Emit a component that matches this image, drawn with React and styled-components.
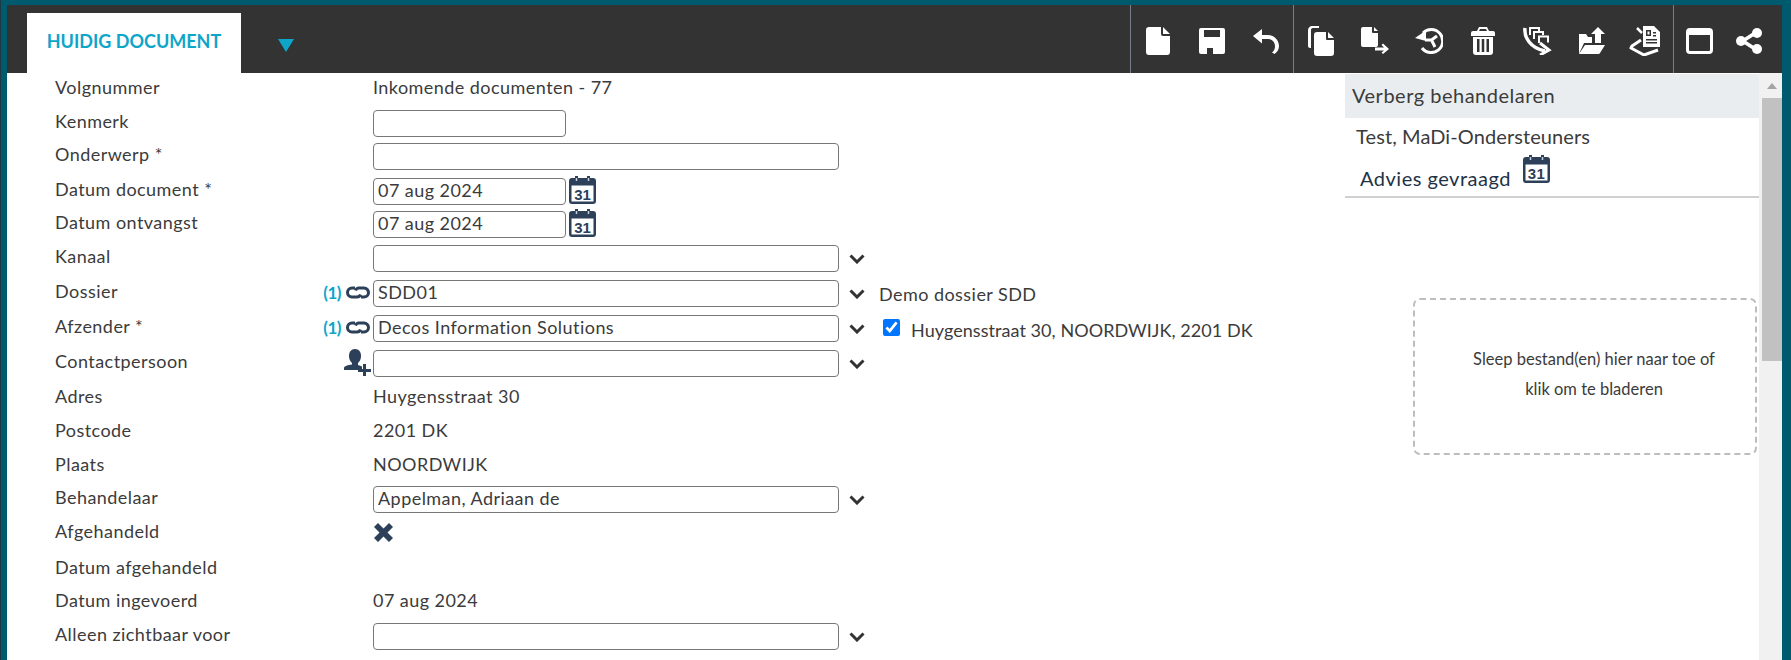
import styled, { createGlobalStyle } from "styled-components";

const GlobalStyle = createGlobalStyle`
  html, body { margin: 0; padding: 0; }
  body { font-family: Lato, "Open Sans", sans-serif; color: #3b3b3b; overflow: hidden; }
`;

const Frame = styled.div`
  width: 1791px;
  height: 660px;
  box-sizing: border-box;
  padding: 5px 9px 0 7px;
  background: #005a6e;
  box-shadow: inset 7px 0 0 -6px #1c3a46;
  display: flex;
  flex-direction: column;
  overflow: hidden;
`;

const Toolbar = styled.div`
  height: 68px;
  flex: none;
  display: flex;
  background: #333333;
  padding-right: 8px;
  box-sizing: border-box;
`;

const Tab = styled.div`
  margin: 8px 0 0 20px;
  width: 214px;
  height: 60px;
  background: #fff;
  color: #0ea5c9;
  font-size: 18px;
  font-weight: 700;
  line-height: 56px;
  text-align: center;
  box-sizing: border-box;
`;

const TabArrow = styled.svg`
  margin: 34px 0 0 37px;
  width: 16px;
  height: 13px;
`;

const ToolGroup = styled.div`
  display: flex;
  border-left: 1px solid #77808a;
  padding-right: ${(p) => p.$pad || 0}px;
  margin-left: ${(p) => (p.$push ? "auto" : 0)};
`;

const ToolButton = styled.div`
  width: ${(p) => p.$w || 54}px;
  display: flex;
  align-items: center;
  justify-content: center;
  padding-top: 3px;
  box-sizing: border-box;
`;

const Body = styled.div`
  flex: 1;
  display: flex;
  background: #fff;
  min-height: 0;
`;

const Form = styled.div`
  flex: 1;
  padding-left: 48px;
`;

const Row = styled.div`
  height: 30px;
  margin-top: ${(p) => p.$top}px;
  display: flex;
  align-items: center;
`;

const LabelCell = styled.div`
  width: 318px;
  flex: none;
  display: flex;
  align-items: center;
  justify-content: space-between;
  padding-right: 2px;
  box-sizing: border-box;
`;

const Label = styled.span`
  font-size: 18px;
  letter-spacing: 0.45px;
  padding-bottom: 2px;
`;

const Value = styled.span`
  font-size: 18px;
  letter-spacing: 0.45px;
  padding-bottom: 2px;
`;

const Address = styled.span`
  font-size: 18px;
  letter-spacing: 0.06px;
  margin-top: 5px;
`;

const Prefix = styled.span`
  display: flex;
  align-items: center;
  gap: 4px;
  color: #0ea5c9;
  font-size: 17px;
  font-weight: 700;
  letter-spacing: -0.5px;
`;

const Field = styled.input`
  width: ${(p) => p.$w}px;
  height: 27px;
  margin-top: 2px;
  box-sizing: border-box;
  border: 1px solid #777;
  border-radius: 4px;
  padding: 0 4px 2px;
  font: 18px Lato, "Open Sans", sans-serif;
  letter-spacing: 0.45px;
  color: #3b3b3b;
  background: #fff;
  outline: none;
`;

const Chevron = styled.svg`
  width: 16px;
  height: 10px;
  margin: 4px 0 0 10px;
  flex: none;
`;

const Note = styled.span`
  margin: 3px 0 0 14px;
  font-size: 18px;
  letter-spacing: 0.45px;
`;

const Check = styled.input`
  width: 17px;
  height: 17px;
  margin: 0 11px 0 18px;
`;

const CalendarSvg = styled.svg`
  width: 27px;
  height: 28px;
  margin-left: ${(p) => p.$left || 0}px;
  flex: none;
  display: block;
`;

const Side = styled.div`
  width: 414px;
  flex: none;
`;

const SideHeader = styled.div`
  height: 44px;
  margin-top: 1px;
  padding-left: 7px;
  background: #e9edf0;
  font-size: 20px;
  letter-spacing: 0.5px;
  line-height: 43px;
`;

const Person = styled.div`
  height: 38px;
  padding-left: 11px;
  font-size: 20px;
  letter-spacing: 0.1px;
  line-height: 36px;
`;

const Status = styled.div`
  height: 40px;
  padding-left: 15px;
  display: flex;
  align-items: flex-end;
  font-size: 20px;
  letter-spacing: 0.5px;
  color: #1f3347;
  border-bottom: 2px solid #d0d0d0;
`;

const StatusText = styled.span`
  margin-bottom: 6px;
`;

const StatusIcon = styled.span`
  margin: 0 0 13px 12px;
`;

const Drop = styled.div`
  margin: 100px 0 0 68px;
  width: 344px;
  height: 157px;
  box-sizing: border-box;
  border: 2px dashed #bdbdbd;
  border-radius: 7px;
  padding: 0 0 6px 18px;
  display: flex;
  align-items: center;
  justify-content: center;
  text-align: center;
  font-size: 16.5px;
  line-height: 30px;
`;

const Scrollbar = styled.div`
  width: 23px;
  flex: none;
  background: #f1f1f1;
  padding-left: 3px;
  box-sizing: border-box;
`;

const ScrollArrow = styled.svg`
  display: block;
  width: 20px;
  height: 25px;
`;

const ScrollThumb = styled.div`
  width: 20px;
  height: 263px;
  background: #c1c1c1;
`;

const Calendar = ({ left }) => (
  <CalendarSvg $left={left} viewBox="0 0 27 28">
    <path
      fill="#2d4059"
      fillRule="evenodd"
      d="M3 2h3V0h3v2h9V0h3v2h3a3 3 0 013 3v20a3 3 0 01-3 3H3a3 3 0 01-3-3V5a3 3 0 013-3zM2.500 9.500v16h22v-16z"
    />
    <path d="M7.500 2v3M19.500 2v3" stroke="#c8d0d8" strokeWidth="1.500" />
    <text x="13.500" y="23.500" textAnchor="middle" fontFamily="Liberation Sans" fontWeight="700" fontSize="15" fill="#2d4059">
      31
    </text>
  </CalendarSvg>
);

const ChainIcon = () => (
  <svg width="26" height="13" viewBox="0 0 26 13" fill="none" stroke="#2d4059" strokeWidth="3">
    <path d="M10 2H7a4.500 4.500 0 000 9h5c2 0 3-1 3.500-2.500" />
    <path d="M16 11h3a4.500 4.500 0 000-9h-5c-2 0-3 1-3.500 2.500" />
  </svg>
);

const UserPlusIcon = () => (
  <svg width="27" height="27" viewBox="0 0 27 27" fill="#2d4059">
    <path d="M11 0c4 0 6 3 6 7 0 3-1 5-3 7v2c2 .5 3 1 4 1.500V21H0v-2c0-2 4-3 8-3.500V14C6 12 5 10 5 7c0-4 2-7 6-7z" />
    <path d="M19 15h3v5h5v3h-5v4h-3v-4h-5v-3h5z" />
  </svg>
);

const CloseIcon = () => (
  <svg width="21" height="21" viewBox="0 0 21 21" fill="#2d4059">
    <path d="M5 1l5.500 5.500L16 1l4 4-5.500 5.500L20 16l-4 4-5.500-5.500L5 20l-4-4 5.500-5.500L1 5z" />
  </svg>
);

const ChevronDown = () => (
  <Chevron viewBox="0 0 16 10" fill="none" stroke="#333" strokeWidth="3">
    <path d="M1.500 1.500L8 8l6.500-6.500" />
  </Chevron>
);

const ToolIcon = ({ w, h, children }) => (
  <svg width={w} height={h} viewBox={`0 0 ${w} ${h}`} fill="#fff" fillRule="evenodd">
    {children}
  </svg>
);

const tools1 = [
  <ToolIcon w={24} h={28} key="new">
    <path d="M3 0h12v7a2 2 0 002 2h7v16a3 3 0 01-3 3H3a3 3 0 01-3-3V3a3 3 0 013-3zM17 0l7 7h-7z" />
  </ToolIcon>,
  <ToolIcon w={26} h={26} key="save">
    <path d="M2 0h22a2 2 0 012 2v22a2 2 0 01-2 2H2a2 2 0 01-2-2V2a2 2 0 012-2zM5 2v7h16V2zM8 20v6h6v-6z" />
  </ToolIcon>,
  <ToolIcon w={26} h={26} key="undo">
    <path d="M9 1L0 8l9 7.500V11h6c4 0 7 3 7 7 0 3-1 5-3 6.500l2.500 1.500c3-2 4.500-5 4.500-8 0-6-5-11-11-11H9z" />
  </ToolIcon>,
];

const tools2 = [
  <ToolIcon w={26} h={30} key="copy">
    <path d="M4 0h7v2H5C3.500 2 3 3 3 4v18H2c-1 0-2-1-2-2V4c0-2 2-4 4-4z" />
    <path d="M9 6h9v7a1 1 0 001 1h7v13a3 3 0 01-3 3H9a3 3 0 01-3-3V9a3 3 0 013-3zM20 6l6 6h-6z" />
  </ToolIcon>,
  <ToolIcon w={28} h={27} key="move">
    <path d="M2 0h9v5a1 1 0 001 1h5v12a2 2 0 01-2 2H2a2 2 0 01-2-2V2a2 2 0 012-2zM13 0l4 4h-4z" />
    <path d="M14 20.500h9l-2.500-2.500 1.500-1.500 6 5.500-6 5-1.500-1.500 2.500-2h-9z" />
  </ToolIcon>,
  <ToolIcon w={28} h={26} key="history">
    <path d="M0 10L11 2.500V13z" />
    <path d="M8 5A11.500 11.500 0 1 1 7 20" fill="none" stroke="#fff" strokeWidth="3" />
    <path d="M10 12h6.500L22 8M16.500 12l3.500 7" fill="none" stroke="#fff" strokeWidth="3" />
  </ToolIcon>,
  <ToolIcon w={24} h={28} key="trash">
    <path d="M8 0h8l2 4h4a2 2 0 012 2v3H0V6a2 2 0 012-2h4zM9 2L8 4h8l-1-2z" />
    <path d="M2 10h20v15a3 3 0 01-3 3H5a3 3 0 01-3-3zM6 12v13h2.500V12zM10.750 12v13h2.500V12zM15.500 12v13H18V12z" />
  </ToolIcon>,
  <ToolIcon w={30} h={28} key="route">
    <path d="M3 1C2 10 8 21 23 24" fill="none" stroke="#fff" strokeWidth="3.500" />
    <path d="M18 16l9 7-9 5" fill="none" stroke="#fff" strokeWidth="3" />
    <path d="M8 8V1h9v3M12 12V5h9v3M17 16V9.500h9v6" fill="none" stroke="#fff" strokeWidth="2" />
  </ToolIcon>,
  <ToolIcon w={28} h={27} key="folder">
    <path d="M2 7h7l2 3h4v6H7L2 27z" />
    <path d="M8 18h20l-5 8a2 2 0 01-2 1H2z" />
    <path d="M21 0l7 7h-4v9h-6V7h-4z" />
  </ToolIcon>,
  <ToolIcon w={32} h={30} key="sign">
    <path d="M14 0h11l6 6v15H14zM17 4v6h5V4zM18.500 5.500h2v3h-2zM24 6v1.500h3V6zM24 9v1.500h3V9zM17 13v1.500h11V13zM17 16v1.500h11V16z" />
    <path d="M8 2l5 5" fill="none" stroke="#fff" strokeWidth="2.500" />
    <path d="M12 14L3 20l-1 2 13 7 14-5" fill="none" stroke="#fff" strokeWidth="3" strokeLinejoin="round" />
  </ToolIcon>,
];

const tools3 = [
  <ToolIcon w={27} h={26} key="window">
    <path d="M4 0h19a4 4 0 014 4v18a4 4 0 01-4 4H4a4 4 0 01-4-4V4a4 4 0 014-4zM3 7v15a1 1 0 001 1h19a1 1 0 001-1V7z" />
  </ToolIcon>,
  <ToolIcon w={26} h={26} key="share">
    <circle cx="21" cy="5" r="5" />
    <circle cx="21" cy="21" r="5" />
    <circle cx="5" cy="13" r="5" />
    <path d="M19 3l2 3L7 15l-2-3z" />
    <path d="M7 11l14 9-2 3L5 14z" />
  </ToolIcon>,
];

const rows = [
  { top: 0, label: "Volgnummer", value: "Inkomende documenten - 77" },
  { top: 4, label: "Kenmerk", field: 193 },
  { top: 3, label: "Onderwerp *", field: 466 },
  { top: 5, label: "Datum document *", field: 193, text: "07 aug 2024", calendar: true },
  { top: 3, label: "Datum ontvangst", field: 193, text: "07 aug 2024", calendar: true },
  { top: 4, label: "Kanaal", field: 466, select: true },
  { top: 5, label: "Dossier", field: 466, text: "SDD01", select: true, chain: true, note: "Demo dossier SDD" },
  { top: 5, label: "Afzender *", field: 466, text: "Decos Information Solutions", select: true, chain: true, address: "Huygensstraat 30, NOORDWIJK, 2201 DK" },
  { top: 5, label: "Contactpersoon", field: 466, select: true, addUser: true },
  { top: 5, label: "Adres", value: "Huygensstraat 30" },
  { top: 4, label: "Postcode", value: "2201 DK" },
  { top: 4, label: "Plaats", value: "NOORDWIJK" },
  { top: 3, label: "Behandelaar", field: 466, text: "Appelman, Adriaan de", select: true },
  { top: 4, label: "Afgehandeld", closed: true },
  { top: 6, label: "Datum afgehandeld" },
  { top: 3, label: "Datum ingevoerd", value: "07 aug 2024" },
  { top: 4, label: "Alleen zichtbaar voor", field: 466, select: true },
];

export default function App() {
  return (
    <Frame>
      <GlobalStyle />
      <Toolbar>
        <Tab>HUIDIG DOCUMENT</Tab>
        <TabArrow viewBox="0 0 16 13">
          <path d="M0 0h16L8 13z" fill="#0ea5c9" />
        </TabArrow>
        <ToolGroup $push>
          {tools1.map((icon) => (
            <ToolButton key={icon.key}>{icon}</ToolButton>
          ))}
        </ToolGroup>
        <ToolGroup $pad={1}>
          {tools2.map((icon) => (
            <ToolButton key={icon.key}>{icon}</ToolButton>
          ))}
        </ToolGroup>
        <ToolGroup>
          {tools3.map((icon) => (
            <ToolButton $w={50} key={icon.key}>
              {icon}
            </ToolButton>
          ))}
        </ToolGroup>
      </Toolbar>
      <Body>
        <Form>
          {rows.map((row) => (
            <Row $top={row.top} key={row.label}>
              <LabelCell>
                <Label>{row.label}</Label>
                {row.chain && (
                  <Prefix>
                    (1)
                    <ChainIcon />
                  </Prefix>
                )}
                {row.addUser && <UserPlusIcon />}
              </LabelCell>
              {row.value && <Value>{row.value}</Value>}
              {row.closed && <CloseIcon />}
              {row.field && <Field $w={row.field} value={row.text || ""} readOnly />}
              {row.calendar && <Calendar left={3} />}
              {row.select && <ChevronDown />}
              {row.note && <Note>{row.note}</Note>}
              {row.address && (
                <>
                  <Check type="checkbox" checked readOnly />
                  <Address>{row.address}</Address>
                </>
              )}
            </Row>
          ))}
        </Form>
        <Side>
          <SideHeader>Verberg behandelaren</SideHeader>
          <Person>Test, MaDi-Ondersteuners</Person>
          <Status>
            <StatusText>Advies gevraagd</StatusText>
            <StatusIcon>
              <Calendar />
            </StatusIcon>
          </Status>
          <Drop>
            <span>
              Sleep bestand(en) hier naar toe of
              <br />
              klik om te bladeren
            </span>
          </Drop>
        </Side>
        <Scrollbar>
          <ScrollArrow viewBox="0 0 20 25">
            <path d="M5 16l5-6 5 6z" fill="#a3a3a3" />
          </ScrollArrow>
          <ScrollThumb />
        </Scrollbar>
      </Body>
    </Frame>
  );
}
